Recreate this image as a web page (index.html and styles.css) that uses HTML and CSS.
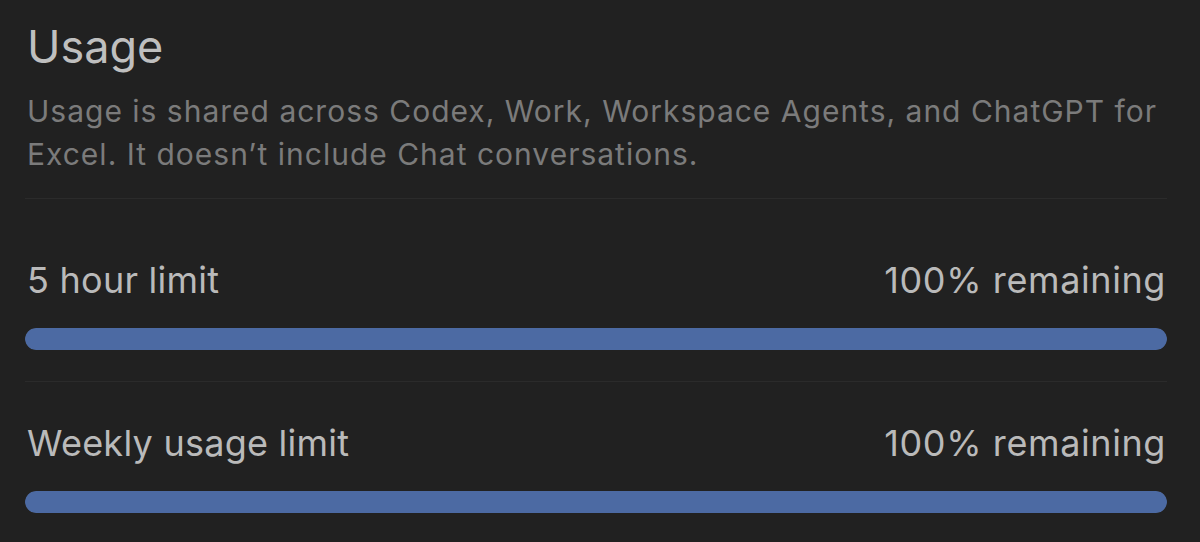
FILE: index.html
```html
<!DOCTYPE html>
<html>

    <head>
        <meta charset="utf-8">
        <title>Usage</title>
        <link rel="stylesheet" href="styles.css">
    </head>

    <body>
        <div class="usage">
            <div class="usage_head">
                <h1 class="usage_title">Usage</h1>
                <p class="usage_desc">Usage is shared across Codex, Work, Workspace Agents, and ChatGPT for Excel. It doesn’t include Chat conversations.</p>
            </div>
            <div class="limit">
                <div class="limit_top">
                    <span class="limit_name">5 hour limit</span>
                    <span class="limit_left">100% remaining</span>
                </div>
                <div class="limit_bar">
                    <div class="limit_fill" style="width: 100%"></div>
                </div>
            </div>
            <div class="limit">
                <div class="limit_top">
                    <span class="limit_name">Weekly usage limit</span>
                    <span class="limit_left">100% remaining</span>
                </div>
                <div class="limit_bar">
                    <div class="limit_fill" style="width: 100%"></div>
                </div>
            </div>
        </div>
    </body>

</html>
```

FILE: styles.css
```css
* {
    margin: 0;
    padding: 0;
}

html,
body {
    height: 100%;
}

body {
    background: #212121;
    font-family: Inter, "Noto Sans", sans-serif;
    overflow: hidden;
}

.usage {
    padding: 19px 33px 0 25px;
}

.usage_head {
    padding-left: 2px;
    padding-bottom: 22px;
    border-bottom: 1px solid #2b2b2b;
    margin-bottom: 20px;
}

.usage_title {
    font-size: 45px;
    line-height: 56px;
    font-weight: 400;
    color: #bfbfbf;
}

.usage_desc {
    margin-top: 15px;
    font-size: 30px;
    line-height: 43px;
    letter-spacing: 1px;
    color: #7b7b7b;
}

.limit {
    padding-top: 39px;
    padding-bottom: 31px;
    border-bottom: 1px solid #2b2b2b;
}

.limit:last-child {
    border: none;
}

.limit_top {
    display: flex;
    justify-content: space-between;
    padding: 0 1px 0 2px;
    font-size: 36px;
    line-height: 44px;
    letter-spacing: 0.25px;
    color: #bababa;
}

.limit_left {
    letter-spacing: 0.6px;
}

.limit_bar {
    height: 22px;
    margin-top: 26px;
    border-radius: 11px;
    background: #333;
    overflow: hidden;
}

.limit_fill {
    height: 100%;
    border-radius: 11px;
    background: #4c6aa3;
}
```
